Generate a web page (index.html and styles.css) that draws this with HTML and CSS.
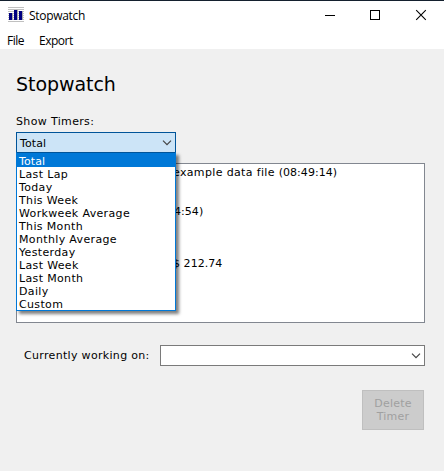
FILE: index.html
```html
<!DOCTYPE html>
<html lang="en">
<head>
<meta charset="utf-8">
<title>Stopwatch</title>
<link rel="stylesheet" href="styles.css">
</head>
<body>
<div class="window">
  <header class="titlebar">
    <svg class="app-icon" width="16" height="15" viewBox="0 0 16 15" shape-rendering="crispEdges">
      <path d="M0 .5h16M0 2.5h16M0 4.5h16M0 6.5h16M0 8.5h16M0 10.5h16M0 12.5h16M0 14.5h16" stroke="#c0c0c0"/>
      <path d="M4.5 6v7M9.5 3v10M14.5 4v9" stroke="#a8a8a8"/>
      <path d="M1 6h3v7H1zM6 3h3v10H6zM11 4h3v9h-3z" fill="#000080"/>
    </svg>
    <span class="title">Stopwatch</span>
    <div class="controls">
      <svg width="45" height="29" viewBox="0 0 45 29" shape-rendering="crispEdges"><path d="M17 14.5h10" stroke="#000"/></svg>
      <svg width="45" height="29" viewBox="0 0 45 29" shape-rendering="crispEdges"><path d="M17.5 9.5h9v9h-9z" fill="none" stroke="#000"/></svg>
      <svg width="46" height="29" viewBox="0 0 46 29"><path d="M18.2 9.2l9.6 9.6M27.8 9.2l-9.6 9.6" stroke="#000" stroke-width="1.1"/></svg>
    </div>
  </header>
  <nav class="menubar"><span>File</span><span>Export</span></nav>
  <main class="content">
    <h1>Stopwatch</h1>
    <div class="label">Show Timers:</div>
    <div class="picker">
      <div class="combo open"><span>Total</span>
        <svg class="chevron" width="10" height="6" viewBox="0 0 10 6"><path d="M1 .7l4 4 4-4" fill="none" stroke="#444" stroke-width="1.2"/></svg>
      </div>
      <ul class="options">
        <li class="selected">Total</li>
        <li>Last Lap</li>
        <li>Today</li>
        <li>This Week</li>
        <li>Workweek Average</li>
        <li>This Month</li>
        <li>Monthly Average</li>
        <li>Yesterday</li>
        <li>Last Week</li>
        <li>Last Month</li>
        <li>Daily</li>
        <li>Custom</li>
      </ul>
    </div>
    <div class="timers">
      <div class="timer example">example data file <span class="digits">(08:49:14)</span></div>
      <div class="timer"></div>
      <div class="timer"></div>
      <div class="timer elapsed digits">4:54)</div>
      <div class="timer"></div>
      <div class="timer"></div>
      <div class="timer"></div>
      <div class="timer amount digits">$ 212.74</div>
    </div>
    <div class="working">
      <span class="working-label">Currently working on:</span>
      <div class="combo">
        <svg class="chevron" width="10" height="6" viewBox="0 0 10 6"><path d="M1 .7l4 4 4-4" fill="none" stroke="#444" stroke-width="1.2"/></svg>
      </div>
    </div>
    <button class="delete" disabled>Delete<br>Timer</button>
  </main>
</div>
</body>
</html>
```
FILE: styles.css
```css
* { box-sizing: border-box; }
body { margin: 0; font: 11px/13px "DejaVu Sans", Verdana, sans-serif; letter-spacing: 0.35px; color: #000; }
.window { display: flex; flex-direction: column; width: 444px; height: 471px; background: #f0f0f0; border-top: 1px solid #14202e; overflow: hidden; white-space: nowrap; }
.titlebar { display: flex; align-items: center; height: 29px; padding-left: 8px; background: #fff; font: 12px/16px "Open Sans", "Noto Sans", sans-serif; }
.app-icon { margin: 0 5px 2px 0; }
.title { letter-spacing: -0.3px; }
.controls { display: flex; margin-left: auto; }
.menubar { display: flex; gap: 15px; height: 19px; padding: 3px 7px 0; background: #fff; font: 12px/16px "Open Sans", "Noto Sans", sans-serif; letter-spacing: -0.5px; }
.content { flex: 1; padding: 23px 19px 0 16px; }
h1 { margin: 0; font-size: 19px; line-height: 24px; font-weight: 400; letter-spacing: -0.05px; }
.label { margin-top: 19px; height: 17px; }
.picker { position: relative; width: 160px; height: 31px; }
.combo { display: flex; align-items: center; height: 21px; padding: 0 3px; background: #fff; border: 1px solid #7a7a7a; }
.combo.open { padding-top: 1px; letter-spacing: 0.1px; background: #cce4f7; border-color: #005499; }
.chevron { margin-left: auto; }
.options { position: absolute; z-index: 1; top: 20px; left: 0; width: 160px; margin: 0; padding: 0; list-style: none; background: #fff; border: 1px solid #0078d7; border-top-color: #005499; box-shadow: 3px 3px 3px rgba(0, 0, 0, .5); }
.options li { height: 13px; padding-left: 2px; line-height: 15px; }
.options .selected { height: 14px; line-height: 17px; letter-spacing: 0.1px; color: #fff; background: #0078d7; }
.timers { height: 160px; padding-top: 2px; background: #fff; border: 1px solid #828790; }
.timer { height: 13px; }
.digits { letter-spacing: 0.05px; }
.example { padding-left: 156px; }
.elapsed { padding-left: 157px; }
.amount { padding-left: 156px; }
.working { display: flex; align-items: center; margin-top: 22px; padding-left: 8px; }
.working-label { width: 136px; letter-spacing: 0.32px; }
.working .combo { flex: 1; }
.delete { display: block; width: 62px; height: 40px; margin: 24px 1px 0 auto; padding: 0; font: inherit; letter-spacing: 0.2px; color: #a0a0a0; background: #ccc; border: 1px solid #bfbfbf; border-radius: 0; }
```
